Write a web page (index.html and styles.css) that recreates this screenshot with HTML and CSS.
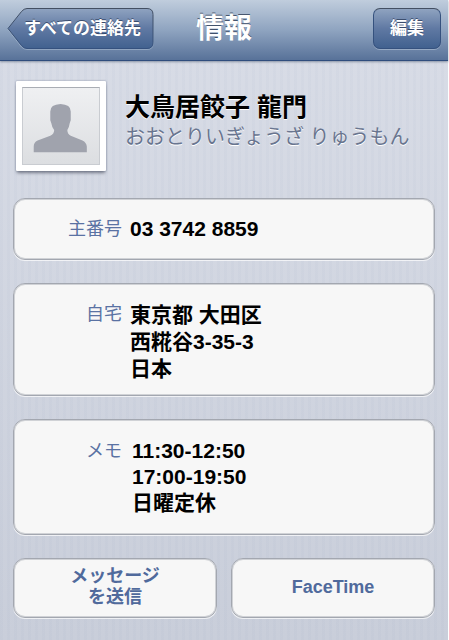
FILE: index.html
```html
<!DOCTYPE html>
<html lang="ja">
<head>
<meta charset="utf-8">
<meta name="viewport" content="width=device-width, initial-scale=1">
<title>情報</title>
<link rel="stylesheet" href="styles.css">
</head>
<body>
<div class="screen">
  <header class="nav">
    <button class="back" type="button">
      <svg class="back-shape" viewBox="0 0 147 42" aria-hidden="true">
        <defs>
          <linearGradient id="btn" x1="0" y1="0" x2="0" y2="1">
            <stop offset="0" stop-color="#8fa3c0"/>
            <stop offset="0.5" stop-color="#6079a3"/>
            <stop offset="1" stop-color="#41618f"/>
          </linearGradient>
          <linearGradient id="edge" x1="0" y1="0" x2="0" y2="1">
            <stop offset="0" stop-color="#434f62"/>
            <stop offset="1" stop-color="#35517e"/>
          </linearGradient>
        </defs>
        <path d="M1 21.500L14.500 4Q17 1.500 20 1.500H140Q146 1.500 146 7V36Q146 41.500 140 41.500H20Q17 41.500 14.500 39Z" fill="none" stroke="#a9bad0" stroke-opacity=".6"/>
        <path d="M1 20.500L14.500 3.500Q17 .500 20 .500H140Q146 .500 146 6.500V34.500Q146 40.500 140 40.500H20Q17 40.500 14.500 37.500Z" fill="url(#btn)" stroke="url(#edge)"/>
      </svg>
      <span class="back-label">すべての連絡先</span>
    </button>
    <h1 class="title">情報</h1>
    <button class="edit" type="button">編集</button>
  </header>
  <main class="content">
    <section class="profile">
      <div class="photo">
        <svg class="person" viewBox="0 0 78 78" role="img" aria-label="写真">
          <path d="M11 66V60Q11 56 15 54L28 49Q32 47 32 43Q29.500 40 29 36L28 33V24Q28 17 38.500 16.500Q49 17 49 24V33L48 36Q47.500 40 45.500 43Q45.500 47 49 49L61 54Q65 56 65.500 60V66Z" fill="#a0a3ad"/>
        </svg>
      </div>
      <div class="names">
        <h2 class="name">大鳥居餃子 龍門</h2>
        <p class="kana">おおとりいぎょうざ りゅうもん</p>
      </div>
    </section>
    <dl class="card phone">
      <dt class="label">主番号</dt>
      <dd class="value">03 3742 8859</dd>
    </dl>
    <dl class="card address">
      <dt class="label">自宅</dt>
      <dd class="value">東京都 大田区<br>西糀谷3-35-3<br>日本</dd>
    </dl>
    <dl class="card memo">
      <dt class="label">メモ</dt>
      <dd class="value">11:30-12:50<br>17:00-19:50<br>日曜定休</dd>
    </dl>
    <div class="actions">
      <button class="action" type="button">メッセージ<br>を送信</button>
      <button class="action" type="button">FaceTime</button>
    </div>
  </main>
</div>
</body>
</html>
```
FILE: styles.css
```css
* {
  box-sizing: border-box;
}

body {
  margin: 0;
  background: #fff;
  font-family: "Liberation Sans", "Noto Sans CJK JP", sans-serif;
}

h1, h2, p, dl, dd {
  margin: 0;
}

button {
  font-family: inherit;
  padding: 0;
}

.screen {
  margin-right: 1px;
  min-height: 100vh;
  background:
    repeating-linear-gradient(90deg, rgba(120, 140, 175, .04) 0 3px, transparent 3px 7px),
    linear-gradient(#d9dde7, #c9ceda);
}

.nav {
  display: grid;
  grid-template-columns: 1fr auto 1fr;
  align-items: center;
  height: 61px;
  padding: 0 7px 3px;
  background: linear-gradient(#c0cddd, #8fa4c0 50%, #587299);
  border-bottom: 1px solid #2f4d7d;
  box-shadow: 0 1px 2px rgba(60, 75, 100, .5);
}

.back {
  position: relative;
  justify-self: start;
  width: 147px;
  height: 42px;
  border: 0;
  background: none;
  color: #fff;
  font-size: 17px;
  font-weight: 700;
  white-space: nowrap;
  text-shadow: 0 -1px 0 rgba(35, 50, 80, .7);
}

.back-shape {
  position: absolute;
  inset: 0;
}

.back-label {
  position: relative;
  display: block;
  padding: 0 12px 4px 16px;
}

.title {
  color: #fff;
  font-size: 28px;
  font-weight: 700;
  line-height: 36px;
  text-shadow: 0 -1px 0 rgba(45, 60, 85, .8);
}

.edit {
  justify-self: end;
  width: 68px;
  height: 41px;
  padding-bottom: 4px;
  border: 1px solid #35517e;
  border-top-color: #434f62;
  border-radius: 7px;
  background: linear-gradient(#8fa3c0, #6079a3 50%, #41618f);
  box-shadow: 0 1px 0 rgba(169, 186, 208, .7);
  color: #fff;
  font-size: 17px;
  font-weight: 700;
  text-shadow: 0 -1px 0 rgba(35, 50, 80, .7);
}

.content {
  display: flex;
  flex-direction: column;
  gap: 23px;
  padding: 20px 13px;
}

.profile {
  display: flex;
  gap: 19px;
  padding-left: 3px;
  min-height: 94px;
}

.photo {
  flex: none;
  align-self: flex-start;
  padding: 6px;
  width: 90px;
  height: 90px;
  background: #fff;
  border-radius: 1px;
  box-shadow: 0 0 2px rgba(90, 100, 125, .7), 0 3px 3px -1px rgba(60, 65, 80, .6);
}

.person {
  display: block;
  width: 78px;
  height: 78px;
  background: linear-gradient(#eff0f2, #dcdee1);
  border: 1px solid #c9ccd1;
  border-top-color: #a9adb4;
}

.names {
  padding-top: 10px;
}

.name {
  color: #000;
  font-size: 25px;
  font-weight: 700;
  line-height: 32px;
  text-shadow: 0 1px 0 #fff;
}

.kana {
  color: #69758f;
  font-size: 20px;
  font-weight: 400;
  line-height: 28px;
  text-shadow: 0 1px 0 #fff;
}

.card, .action {
  border: 1px solid #a3a7b0;
  border-radius: 12px;
  background: #f7f7f7;
  box-shadow: inset 0 0 0 1px #d0d2d6, 0 1px 0 rgba(255, 255, 255, .7);
}

.card {
  display: grid;
  grid-template-columns: 108px 1fr;
  column-gap: 8px;
  line-height: 26px;
}

.phone {
  padding: 17px 0;
}

.address {
  padding: 17px 0 13px;
  line-height: 27px;
}

.memo {
  column-gap: 10px;
  padding: 18px 0;
}

.label {
  text-align: right;
  color: #5a72a3;
  font-size: 18px;
  font-weight: 400;
}

.value {
  color: #000;
  font-size: 21px;
  font-weight: 700;
}

.actions {
  display: grid;
  grid-template-columns: 1fr 1fr;
  gap: 14px;
}

.action {
  height: 60px;
  padding-bottom: 2px;
  color: #506a9c;
  font-size: 18px;
  font-weight: 700;
  line-height: 21px;
}
```
